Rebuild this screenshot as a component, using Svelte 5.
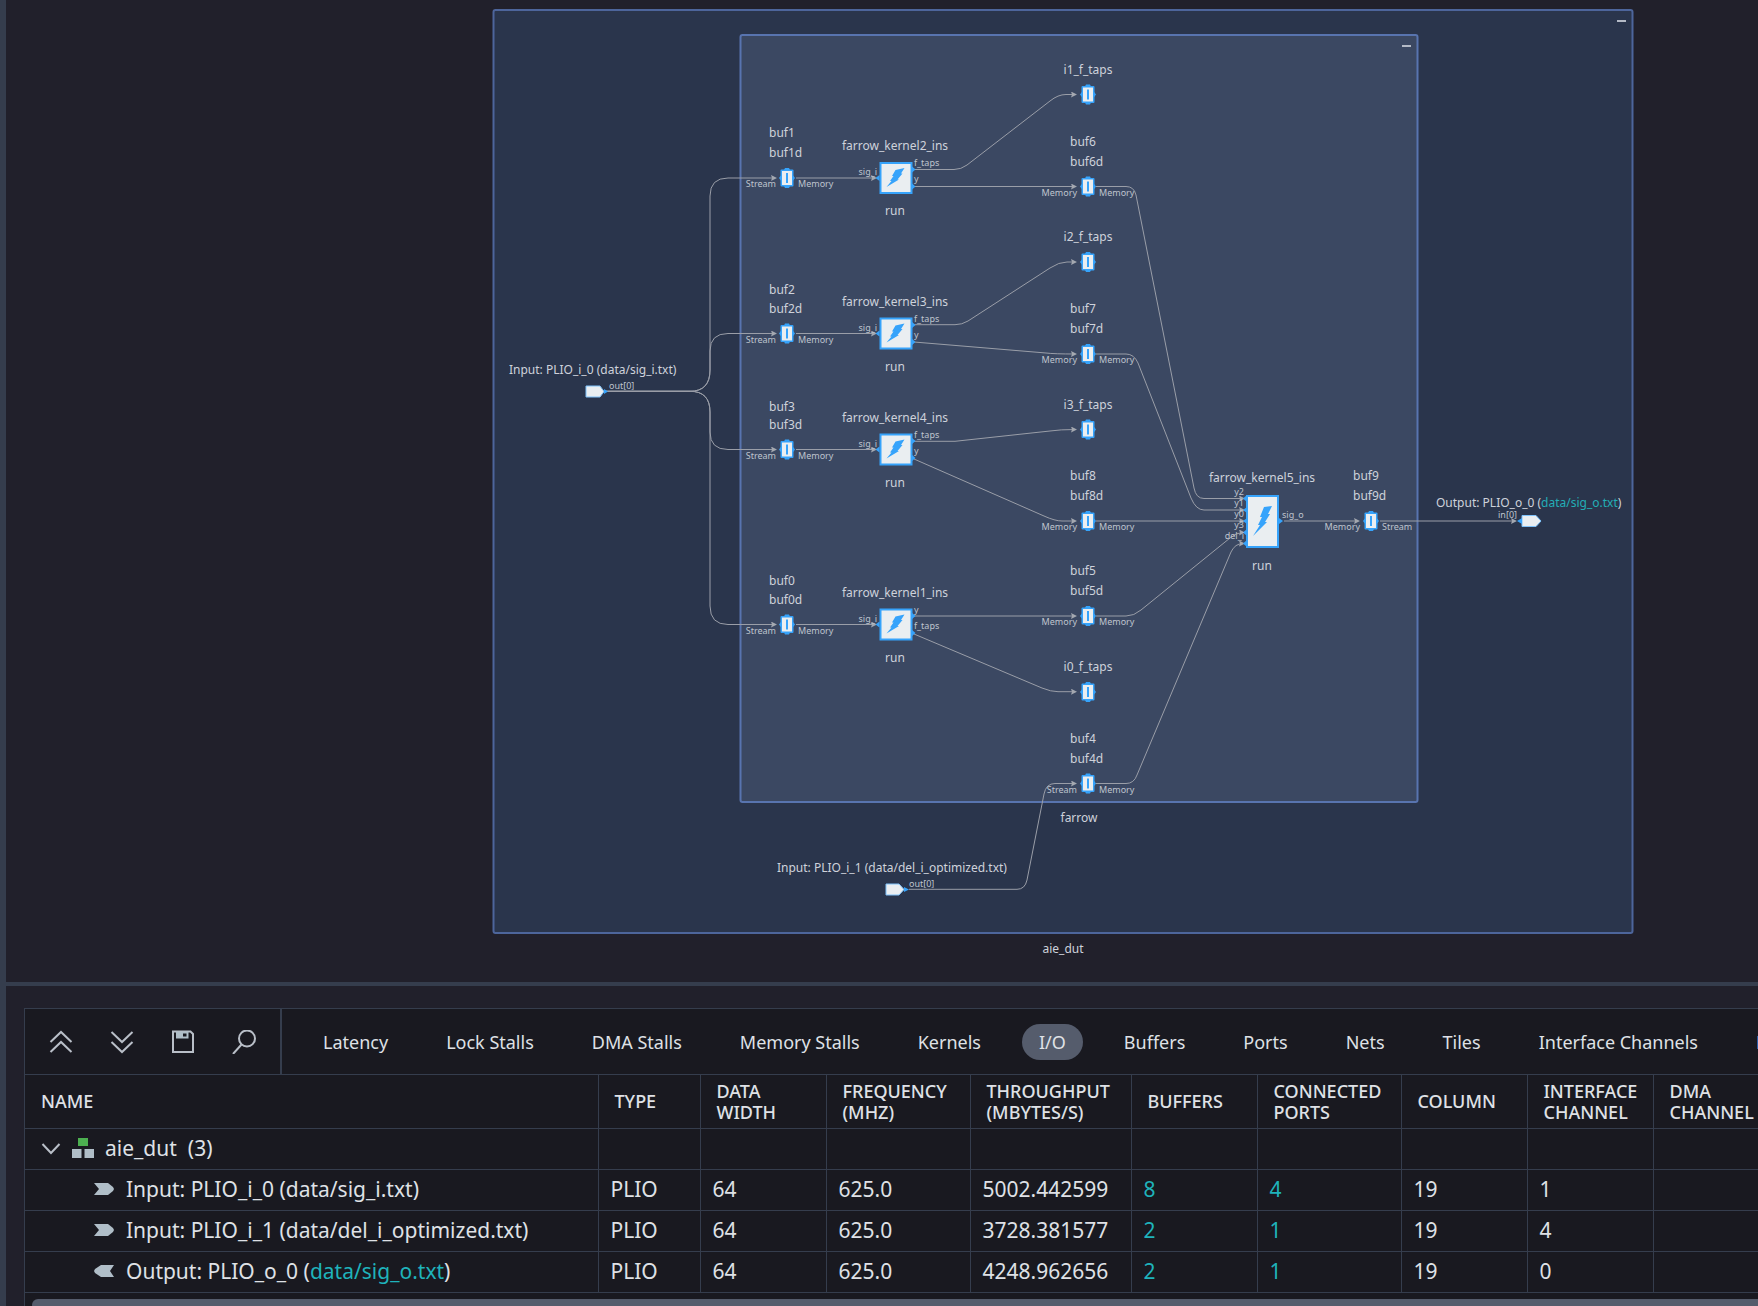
<script>
  const edges = [
    'M604 391.3H690Q710 391.3 710 370V196Q710 178 728 178H775',
    'M604 391.3H690Q710 391.3 710 370V351Q710 333.5 728 333.5H775',
    'M604 391.3H690Q710 391.3 710 412V432Q710 449.5 728 449.5H775',
    'M604 391.3H690Q710 391.3 710 412V606Q710 624.5 728 624.5H775',
    'M909 889.3H1017Q1025 889.3 1027 880L1044 794Q1046 783.5 1055 783.5H1075',
    'M914 169.5H954Q961 169.5 967 165L1050 101Q1058 94.5 1066 94.5H1075',
    'M914 186.5H1075',
    'M914 324.7H955Q962 324.7 968 321L1050 268Q1059 262 1067 262H1075',
    'M914 342L1046 353Q1054 354 1075 354',
    'M914 441.3H955L1050 431Q1060 429.5 1075 429.5',
    'M914 459L1044 516Q1055 521 1062 521H1075',
    'M914 616H1075',
    'M914 634L1042 688Q1051 691.7 1058 691.7H1075',
    'M1096 186.5H1126Q1134 186.5 1136 195L1194 488Q1196 498.5 1204 498.5H1243',
    'M1096 354H1126Q1134 354 1138 363L1191 498Q1196 510 1204 510H1243',
    'M1096 521H1243',
    'M1096 616H1126Q1134 616 1141 610L1230 538Q1236 532.5 1243 532.5',
    'M1096 783.5H1126Q1134 783.5 1137 775L1231 552Q1235 543.5 1243 543.5',
    'M1284 521H1358',
    'M1380 521H1515'
  ];

  const memory = [
    { x: 787, y: 178, left: 'Stream', right: 'Memory', names: ['buf1', 'buf1d'], first: -41 },
    { x: 787, y: 333.5, left: 'Stream', right: 'Memory', names: ['buf2', 'buf2d'], first: -40 },
    { x: 787, y: 449.5, left: 'Stream', right: 'Memory', names: ['buf3', 'buf3d'], first: -39 },
    { x: 787, y: 624.5, left: 'Stream', right: 'Memory', names: ['buf0', 'buf0d'], first: -40 },
    { x: 1088, y: 186.5, left: 'Memory', right: 'Memory', names: ['buf6', 'buf6d'], first: -41 },
    { x: 1088, y: 354, left: 'Memory', right: 'Memory', names: ['buf7', 'buf7d'], first: -41 },
    { x: 1088, y: 521, left: 'Memory', right: 'Memory', names: ['buf8', 'buf8d'], first: -41 },
    { x: 1088, y: 616, left: 'Memory', right: 'Memory', names: ['buf5', 'buf5d'], first: -41 },
    { x: 1088, y: 783.5, left: 'Stream', right: 'Memory', names: ['buf4', 'buf4d'], first: -41 },
    { x: 1371, y: 521, left: 'Memory', right: 'Stream', names: ['buf9', 'buf9d'], first: -41 }
  ];

  const taps = [
    { name: 'i1_f_taps', y: 94.5 },
    { name: 'i2_f_taps', y: 262 },
    { name: 'i3_f_taps', y: 429.5 },
    { name: 'i0_f_taps', y: 692 }
  ];

  const kernels = [
    { name: 'farrow_kernel2_ins', y: 178, outs: ['f_taps', 'y'] },
    { name: 'farrow_kernel3_ins', y: 333.5, outs: ['f_taps', 'y'] },
    { name: 'farrow_kernel4_ins', y: 449.5, outs: ['f_taps', 'y'] },
    { name: 'farrow_kernel1_ins', y: 624.5, outs: ['y', 'f_taps'] }
  ];

  const sumPorts = ['y2', 'y1', 'y0', 'y3', 'del_i'];

  const tabs = ['Latency', 'Lock Stalls', 'DMA Stalls', 'Memory Stalls', 'Kernels', 'I/O', 'Buffers', 'Ports', 'Nets', 'Tiles', 'Interface Channels', 'DMA Channels'];
  let active = $state('I/O');

  const columns = [
    { key: 'name', label: 'NAME' },
    { key: 'type', label: 'TYPE' },
    { key: 'width', label: 'DATA WIDTH' },
    { key: 'freq', label: 'FREQUENCY (MHZ)' },
    { key: 'rate', label: 'THROUGHPUT (MBYTES/S)' },
    { key: 'buffers', label: 'BUFFERS' },
    { key: 'ports', label: 'CONNECTED PORTS' },
    { key: 'column', label: 'COLUMN' },
    { key: 'iface', label: 'INTERFACE CHANNEL' },
    { key: 'dma', label: 'DMA CHANNEL' }
  ];

  const rows = [
    { out: false, prefix: 'Input: PLIO_i_0 (', file: 'data/sig_i.txt', rate: '5002.442599', buffers: 8, ports: 4, iface: 1 },
    { out: false, prefix: 'Input: PLIO_i_1 (', file: 'data/del_i_optimized.txt', rate: '3728.381577', buffers: 2, ports: 1, iface: 4 },
    { out: true, prefix: 'Output: PLIO_o_0 (', file: 'data/sig_o.txt', rate: '4248.962656', buffers: 2, ports: 1, iface: 0 }
  ];
</script>

{#snippet chip(x, y)}
  <g transform="translate({x} {y})">
    <path class="port" d="M-8 0L-5 -4V4ZM8 0L5 -4V4ZM-2 -10H2L3 -8V8L2 10H-2L-3 8V-8Z" />
    <rect class="halo" x="-6.500" y="-8.500" width="13" height="17" rx="1" />
    <rect class="face" x="-5" y="-7" width="10" height="14" />
    <rect class="port" x="-1" y="-5" width="2" height="10" />
  </g>
{/snippet}

<div class="app">
  <section class="canvas" aria-label="Graph">
    <svg viewBox="6 0 1752 982" role="img" aria-label="aie_dut graph">
      <defs>
        <marker id="tip" markerWidth="6" markerHeight="6" refX="4" refY="3" orient="auto" markerUnits="userSpaceOnUse">
          <path class="tip" d="M0 0L6 3L0 6L1 3Z" />
        </marker>
      </defs>

      <rect class="outer" x="493.5" y="10" width="1139" height="923" rx="2" />
      <rect class="inner" x="740.5" y="35" width="677" height="767" rx="2" />
      <path class="minus" d="M1402 46H1411M1617 21H1626" />

      {#each edges as d}
        <path class="edge" {d} marker-end="url(#tip)" />
      {/each}
      {#each kernels as k}
        <path class="edge" d="M796 {k.y}H875" marker-end="url(#tip)" />
      {/each}

      {#each memory as m}
        <text x={m.x - 18} y={m.y + m.first}>{m.names[0]}</text>
        <text x={m.x - 18} y={m.y - 21}>{m.names[1]}</text>
        <text class="small end" x={m.x - 11} y={m.y + 9}>{m.left}</text>
        <text class="small" x={m.x + 11} y={m.y + 9}>{m.right}</text>
        {@render chip(m.x, m.y)}
      {/each}

      {#each taps as t}
        <text class="mid" x="1088" y={t.y - 21}>{t.name}</text>
        {@render chip(1088, t.y)}
      {/each}

      {#each kernels as k}
        <text class="mid" x="895" y={k.y - 28}>{k.name}</text>
        <text class="mid" x="895" y={k.y + 37}>run</text>
        <text class="small end" x="877" y={k.y - 3}>sig_i</text>
        <text class="small" x="914" y={k.y - 12}>{k.outs[0]}</text>
        <text class="small" x="914" y={k.y + 4}>{k.outs[1]}</text>
        <g transform="translate(895.5 {k.y})">
          <rect class="box" x="-15" y="-15" width="31" height="30" />
          <path class="port" d="M-20 0L-16 -3V3ZM20 -8.500L16 -12V-5ZM20 8.500L16 5V12Z" />
          <path class="port" d="M0 -8L9 -10L5.500 -4.500L7 -4.500L2 1.500L3.500 1.500L-9 9L-4 3L-5.500 3L-2 -2L-3.500 -2Z" />
        </g>
      {/each}

      <text class="mid" x="1262" y="482">farrow_kernel5_ins</text>
      <text class="mid" x="1262" y="570">run</text>
      <g transform="translate(1263 521)">
        <rect class="box" x="-16" y="-25" width="31" height="51" />
        <path class="port" d="M-20 -22.500L-16 -26V-19ZM-20 -11L-16 -14V-8ZM-20 0L-16 -3V3ZM-20 11.500L-16 8V15ZM-20 22.500L-16 19V26ZM20 0L16 -3V3Z" />
        <path class="port" d="M1 -14L9 -15L5 -7L7 -7L2 1L4 1L-10 15L-3 4L-5 4L-1 -4L-3 -4Z" />
      </g>
      {#each sumPorts as p, i}
        <text class="small end" x="1244" y={495 + i * 11}>{p}</text>
      {/each}
      <text class="small" x="1282" y="518">sig_o</text>

      <text x="509" y="374">Input: PLIO_i_0 (data/sig_i.txt)</text>
      <text class="small" x="609" y="389">out[0]</text>
      <path class="io" d="M586 386H600L604 391.500L600 397H586Z" />
      <path class="port" d="M604 389L608 391.500L604 394Z" />

      <text x="777" y="872">Input: PLIO_i_1 (data/del_i_optimized.txt)</text>
      <text class="small" x="909" y="887">out[0]</text>
      <path class="io" d="M886 884H899L904 889.500L899 895H886Z" />
      <path class="port" d="M904 887L909 889.500L904 892Z" />

      <text x="1436" y="507">Output: PLIO_o_0 (<tspan class="link">data/sig_o.txt</tspan>)</text>
      <text class="small end" x="1517" y="518">in[0]</text>
      <path class="io" d="M1522 515.500H1536L1541 521L1536 526.500H1522Z" />
      <path class="port" d="M1517 521L1522 518V524Z" />

      <text class="mid" x="1079" y="822">farrow</text>
      <text class="mid" x="1063" y="953">aie_dut</text>
    </svg>
  </section>

  <section class="details" aria-label="Details">
    <div class="panel">
      <div class="bar">
        <div class="tools">
          <button aria-label="Collapse all">
            <svg viewBox="0 0 24 24"><path d="M1.500 12L12 2L22.500 12M1.500 22L12 12L22.500 22" /></svg>
          </button>
          <button aria-label="Expand all">
            <svg viewBox="0 0 24 24"><path d="M1.500 2L12 12L22.500 2M1.500 12L12 22L22.500 12" /></svg>
          </button>
          <button aria-label="Save">
            <svg viewBox="0 0 24 24"><path d="M2 1.500H19.500L22 4V22H2Z" /><path class="solid" d="M5 1.500H17.500V8.500H5ZM12 3.500V6.500H15.500V3.500Z" fill-rule="evenodd" /></svg>
          </button>
          <button aria-label="Search">
            <svg viewBox="0 0 24 24"><circle cx="15" cy="8.500" r="8" /><path d="M9.500 14.500L1 24" /></svg>
          </button>
        </div>
        <div class="tabs" role="tablist">
          {#each tabs as tab}
            <button role="tab" aria-selected={active === tab} class:on={active === tab} onclick={() => (active = tab)}>{tab}</button>
          {/each}
        </div>
      </div>

      <table>
        <colgroup>
          {#each columns as c}<col class={c.key} />{/each}
        </colgroup>
        <thead>
          <tr>{#each columns as c}<th scope="col">{c.label}</th>{/each}</tr>
        </thead>
        <tbody>
          <tr>
            <td>
              <div class="cell root">
                <button class="twist" aria-label="Collapse aie_dut">
                  <svg viewBox="0 0 20 14"><path d="M1.500 3L10 12L18.500 3" /></svg>
                </button>
                <svg class="tree" viewBox="0 0 22 20"><path class="green" d="M6 0H16V8H6Z" /><path class="grey" d="M0 11H9.500V20H0ZM12.500 11H22V20H12.500Z" /></svg>
                <span>aie_dut</span><span>(3)</span>
              </div>
            </td>
            {#each columns.slice(1) as c}<td></td>{/each}
          </tr>
          {#each rows as r}
            <tr>
              <td>
                <div class="cell leaf">
                  <svg class="dir" viewBox="0 0 20 12">
                    {#if r.out}
                      <path class="grey" d="M20 0H7L1 4L0 6L1 8L7 12H20L16 6Z" />
                    {:else}
                      <path class="grey" d="M0 0H14L19 4L20 6L19 8L14 12H0L5 6Z" />
                    {/if}
                  </svg>
                  <span>{r.prefix}{#if r.out}<a href="#file">{r.file}</a>{:else}{r.file}{/if})</span>
                </div>
              </td>
              <td>PLIO</td>
              <td>64</td>
              <td>625.0</td>
              <td>{r.rate}</td>
              <td><a href="#buffers">{r.buffers}</a></td>
              <td><a href="#ports">{r.ports}</a></td>
              <td>19</td>
              <td>{r.iface}</td>
              <td></td>
            </tr>
          {/each}
        </tbody>
      </table>
      <div class="thumb"></div>
    </div>
  </section>
</div>

<style>
  :global(body) {
    background: #21202b;
    overflow: hidden;
  }
  .app {
    min-height: 100vh;
    box-sizing: border-box;
    border-left: 6px solid #353d4d;
    background: #21202b;
    color: #dfe1e6;
    font-family: 'Noto Sans', sans-serif;
    overflow: hidden;
  }
  .canvas {
    border-bottom: 4px solid #353d4d;
  }
  .canvas svg {
    display: block;
    width: 100%;
    height: auto;
  }
  .canvas text {
    fill: #ced2db;
    font-size: 12px;
  }
  .canvas .small {
    font-size: 9px;
    fill: #bfc4ce;
  }
  .mid {
    text-anchor: middle;
  }
  .end {
    text-anchor: end;
  }
  .canvas .link {
    fill: #23aeb6;
  }
  .outer {
    fill: #2a354c;
    stroke: #4d659b;
    stroke-width: 2;
  }
  .inner {
    fill: #3b4862;
    stroke: #5874af;
    stroke-width: 2;
  }
  .minus {
    stroke: #b4bac6;
    stroke-width: 2;
  }
  .edge {
    fill: none;
    stroke: #9a9ea8;
    stroke-width: 1;
  }
  .tip {
    fill: #a4a8b0;
  }
  .port {
    fill: #36a3fb;
  }
  .halo {
    fill: #36a3fb;
  }
  .face {
    fill: #eaeef1;
  }
  .box {
    fill: #eaeef1;
    stroke: #36a3fb;
    stroke-width: 2;
  }
  .io {
    fill: #eaeef1;
    stroke: #7fc2fa;
    stroke-width: 1;
  }

  .details {
    padding: 22px 0 0 18px;
  }
  .panel {
    border: 1px solid #353d4d;
    border-right: 0;
    background: #191920;
    overflow: hidden;
  }
  .bar {
    display: flex;
    height: 65px;
  }
  button {
    padding: 0;
    border: 0;
    background: none;
    color: inherit;
    font: inherit;
    flex: none;
    cursor: pointer;
  }
  .panel svg {
    display: block;
    fill: none;
    stroke: #b9bfc8;
    stroke-width: 2;
  }
  .tools {
    display: flex;
    flex: none;
    align-items: center;
    gap: 37px;
    padding: 0 24px;
    border-right: 2px solid #353d4d;
  }
  .tools svg {
    width: 24px;
    height: 24px;
  }
  .panel .solid,
  .panel .grey {
    fill: #b0bec8;
    stroke: none;
  }
  .panel .green {
    fill: #4caf50;
    stroke: none;
  }
  .tabs {
    display: flex;
    align-items: center;
    gap: 24px;
    padding-left: 24px;
    font-size: 18px;
    line-height: 36px;
    white-space: nowrap;
  }
  .tabs button {
    padding: 0 17px;
    border-radius: 18px;
  }
  .tabs .on {
    background: #555c6c;
  }
  table {
    table-layout: fixed;
    width: 1759px;
    border-collapse: collapse;
  }
  .name { width: 573px; }
  .type { width: 102px; }
  .width { width: 126px; }
  .freq { width: 144px; }
  .rate { width: 161px; }
  .buffers { width: 126px; }
  .ports { width: 144px; }
  .column { width: 126px; }
  .iface { width: 126px; }
  .dma { width: 131px; }
  th,
  td {
    border: 1px solid #353d4d;
    text-align: left;
    white-space: nowrap;
    box-sizing: border-box;
  }
  th:first-child,
  td:first-child {
    border-left: 0;
  }
  th {
    height: 54px;
    padding: 0 16px;
    font-size: 18px;
    line-height: 21px;
    font-weight: 500;
    white-space: normal;
  }
  td {
    height: 41px;
    padding: 0 12px 2px;
    font-size: 21px;
    line-height: 32px;
  }
  a {
    color: #1fb3bb;
    text-decoration: none;
  }
  .cell {
    display: flex;
    align-items: center;
  }
  .root {
    gap: 11px;
    padding-left: 4px;
  }
  .twist svg {
    width: 20px;
    height: 14px;
  }
  .tree {
    width: 22px;
    height: 20px;
  }
  .leaf {
    gap: 12px;
    padding-left: 57px;
  }
  .dir {
    width: 20px;
    height: 12px;
  }
  .thumb {
    margin: 6px 0 0 7px;
    height: 12px;
    border-radius: 6px 0 0 6px;
    background: #555c6c;
  }
</style>
